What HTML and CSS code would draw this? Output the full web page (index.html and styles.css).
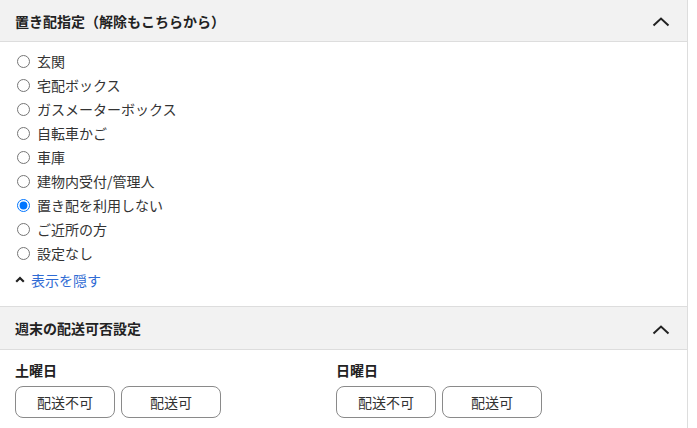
FILE: index.html
```html
<!DOCTYPE html>
<html lang="ja">
<head>
<meta charset="utf-8">
<link rel="stylesheet" href="styles.css">
</head>
<body>
<div class="panel">
  <div class="sec-head">
    <span class="sec-title">置き配指定（解除もこちらから）</span>
    <svg class="chev" width="18" height="10" viewBox="0 0 18 10"><path d="M1.5 8.5 L9 1.5 L16.5 8.5" fill="none" stroke="#222" stroke-width="2"/></svg>
  </div>
  <div class="sec-body">
    <ul class="radio-list">
      <li><label><input type="radio" name="oki"> 玄関</label></li>
      <li><label><input type="radio" name="oki"> 宅配ボックス</label></li>
      <li><label><input type="radio" name="oki"> ガスメーターボックス</label></li>
      <li><label><input type="radio" name="oki"> 自転車かご</label></li>
      <li><label><input type="radio" name="oki"> 車庫</label></li>
      <li><label><input type="radio" name="oki"> 建物内受付/管理人</label></li>
      <li><label><input type="radio" name="oki" checked> 置き配を利用しない</label></li>
      <li><label><input type="radio" name="oki"> ご近所の方</label></li>
      <li><label><input type="radio" name="oki"> 設定なし</label></li>
    </ul>
    <div class="toggle">
      <svg class="caret" width="10" height="7" viewBox="0 0 10 7"><path d="M1.2 5.8 L5 2 L8.8 5.8" fill="none" stroke="#222" stroke-width="2.2"/></svg>
      <a class="toggle-link">表示を隠す</a>
    </div>
  </div>
  <div class="sec-head sec-head-2">
    <span class="sec-title">週末の配送可否設定</span>
    <svg class="chev" width="18" height="10" viewBox="0 0 18 10"><path d="M1.5 8.5 L9 1.5 L16.5 8.5" fill="none" stroke="#222" stroke-width="2"/></svg>
  </div>
  <div class="weekend">
    <div class="day">
      <div class="day-name">土曜日</div>
      <div class="btns">
        <button class="btn">配送不可</button>
        <button class="btn">配送可</button>
      </div>
    </div>
    <div class="day">
      <div class="day-name">日曜日</div>
      <div class="btns">
        <button class="btn">配送不可</button>
        <button class="btn">配送可</button>
      </div>
    </div>
  </div>
</div>
</body>
</html>
```

FILE: styles.css
```css
* { box-sizing: border-box; }
html, body { margin: 0; padding: 0; background: #fff; }
body {
  font-family: "Noto Sans CJK JP", "Noto Sans", sans-serif;
  font-size: 14px;
  color: #333;
}
.panel {
  width: 688px;
  border-right: 1px solid #ddd;
  min-height: 428px;
}
.sec-head {
  display: flex;
  align-items: center;
  justify-content: space-between;
  height: 42px;
  padding: 0 17px 0 15px;
  background: #f2f2f2;
  border-bottom: 1px solid #ddd;
}
.sec-head-2 {
  height: 44px;
  border-top: 1px solid #ddd;
}
.sec-title {
  font-size: 14px;
  font-weight: bold;
  color: #222;
  line-height: 20px;
}
.chev { display: block; margin-top: 3px; }
.sec-body {
  padding: 7px 0 14px 0;
}
.radio-list {
  list-style: none;
  margin: 0;
  padding: 0 0 0 12px;
}
.radio-list li {
  height: 24px;
  line-height: 24px;
}
.radio-list label {
  display: inline-flex;
  align-items: center;
  gap: 4px;
  color: #333;
}
.radio-list input {
  margin: 0 3px 0 5px;
  width: 13px;
  height: 13px;
}
.toggle {
  display: flex;
  align-items: center;
  height: 24px;
  margin-top: 3px;
  padding-left: 15px;
  gap: 6px;
}
.caret { display: block; margin-top: -2px; }
.toggle-link {
  color: #2f6bd4;
  cursor: pointer;
}
.weekend {
  display: grid;
  grid-template-columns: 321px 1fr;
  padding: 10px 15px 0 15px;
}
.day-name {
  font-weight: bold;
  color: #222;
  line-height: 20px;
  margin-bottom: 6px;
}
.btns {
  display: flex;
  gap: 6px;
}
.btn {
  width: 100px;
  height: 32px;
  background: #fff;
  border: 1px solid #8a8a8a;
  border-radius: 8px;
  font-family: "Noto Sans CJK JP", "Noto Sans", sans-serif;
  font-size: 14px;
  color: #333;
  padding: 0;
}
```
